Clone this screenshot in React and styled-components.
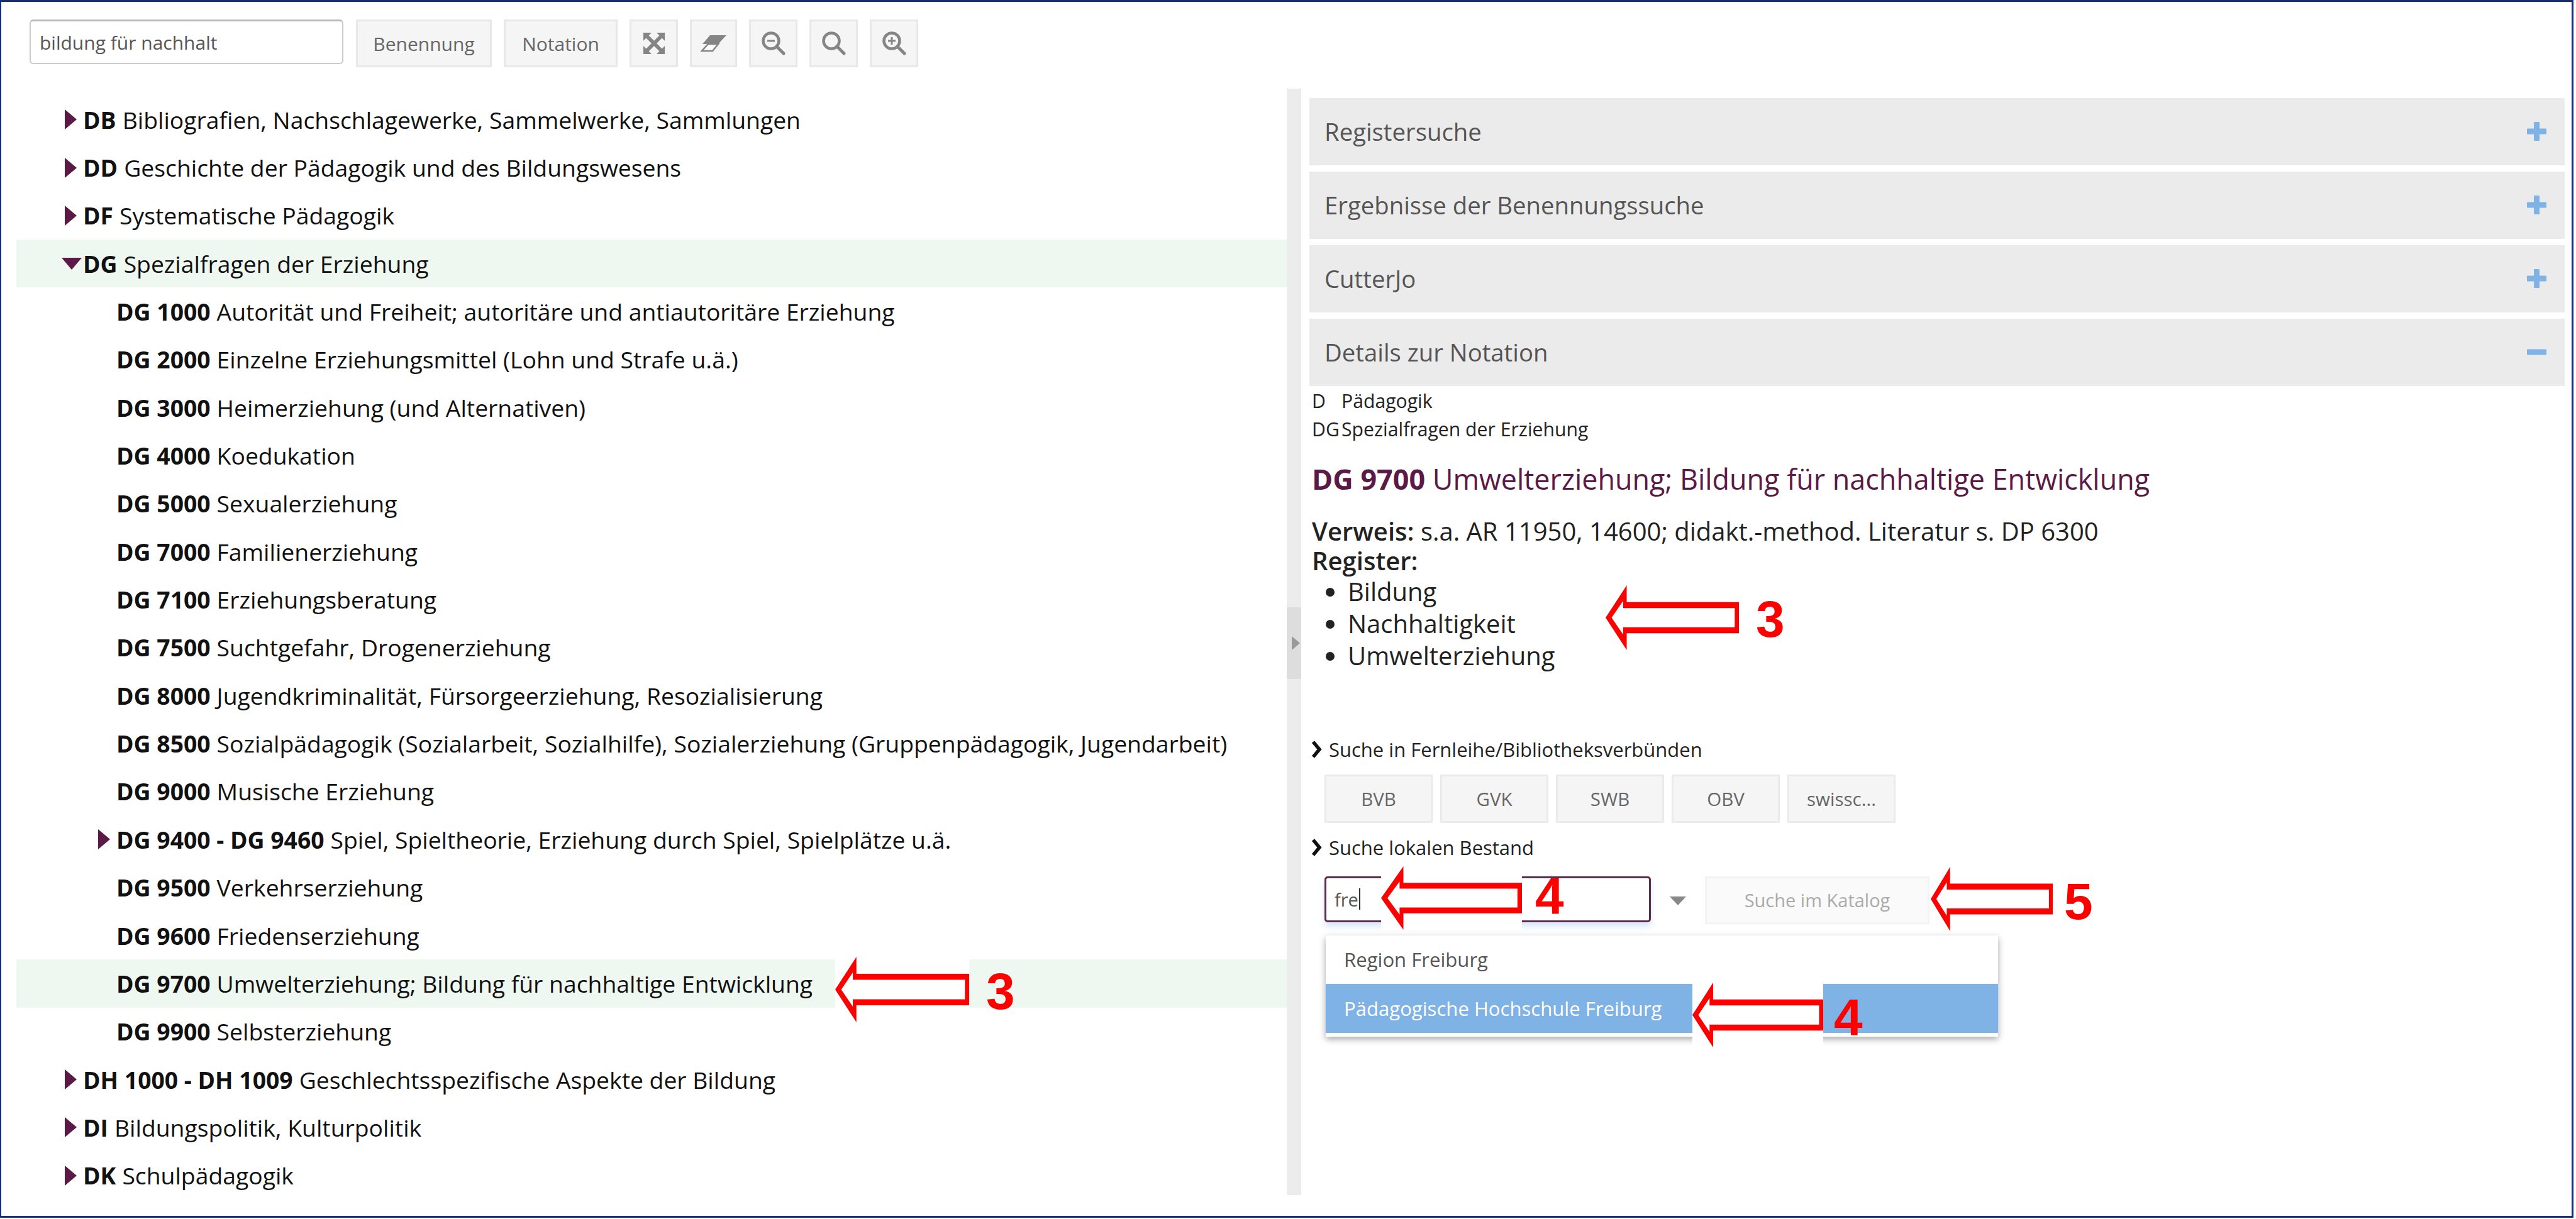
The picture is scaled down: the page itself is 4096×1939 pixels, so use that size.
import React from "react";
import styled, { createGlobalStyle } from "styled-components";

const Global = createGlobalStyle`
  html, body { margin: 0; padding: 0; background: #fff; }
  body { font-family: "Open Sans", "Noto Sans", sans-serif; }
`;

const Root = styled.div`
  position: relative;
  box-sizing: border-box;
  width: 4092px;
  height: 1937px;
  border: solid #13306c;
  border-width: 3px 3px 3px 2px;
  background: #fff;
  overflow: hidden;
  display: flex;
  flex-direction: column;
`;

const Toolbar = styled.div`
  display: flex;
  align-items: flex-start;
  gap: 19px;
  padding: 28px 0 0 45px;
  height: 138px;
  box-sizing: border-box;
  flex: none;
`;

const SearchInput = styled.div`
  box-sizing: border-box;
  width: 499px;
  height: 71px;
  margin-right: 1px;
  border: 2px solid #ccc;
  border-top: 3px solid #bbb;
  border-radius: 6px;
  padding-left: 14px;
  display: flex;
  align-items: center;
  font-size: 30px;
  color: #555;
`;

const ToolButton = styled.div`
  box-sizing: border-box;
  width: ${(p) => p.$w}px;
  height: 76px;
  background: #f5f5f5;
  border: 3px solid #e8e8e8;
  display: flex;
  align-items: center;
  justify-content: center;
  font-size: 30px;
  color: #666;
`;

const Main = styled.div`
  display: flex;
  align-items: flex-start;
  flex: none;
`;

const Tree = styled.div`
  box-sizing: border-box;
  width: 2020px;
  margin-left: 24px;
  padding-top: 11px;
  flex: none;
`;

const Row = styled.div`
  box-sizing: border-box;
  height: 76.35px;
  display: flex;
  align-items: center;
  padding-left: ${(p) => p.$indent}px;
  background: ${(p) => (p.$active ? "#eef7f0" : "transparent")};
  font-size: 37.3px;
  color: #111;
  white-space: nowrap;
`;

const ToggleSlot = styled.span`
  width: 31px;
  flex: none;
  display: flex;
  align-items: center;
  justify-content: flex-start;
`;

const RightTri = styled.span`
  width: 0;
  height: 0;
  margin-left: 2px;
  border-style: solid;
  border-width: 16px 0 16px 19px;
  border-color: transparent transparent transparent #5b1a45;
`;

const DownTri = styled.span`
  width: 0;
  height: 0;
  margin-left: -3px;
  border-style: solid;
  border-width: 19px 16px 0 16px;
  border-color: #5b1a45 transparent transparent transparent;
`;

const Code = styled.b`
  font-weight: 700;
  margin-right: 10px;
`;

const Splitter = styled.div`
  width: 23px;
  height: 1760px;
  flex: none;
  background: #ececec;
  display: flex;
  flex-direction: column;
  padding-top: 825px;
  box-sizing: border-box;
`;

const SplitHandle = styled.div`
  height: 114px;
  background: #dddddd;
  display: flex;
  align-items: center;
  padding-left: 8px;
  box-sizing: border-box;
`;

const SplitTri = styled.span`
  width: 0;
  height: 0;
  border-style: solid;
  border-width: 11px 0 11px 13px;
  border-color: transparent transparent transparent #999;
`;

const Right = styled.div`
  flex: none;
  width: 1996px;
  margin-left: 13px;
  padding-top: 15px;
  box-sizing: border-box;
`;

const Accordion = styled.div`
  display: flex;
  flex-direction: column;
  gap: 10.5px;
`;

const AccHead = styled.div`
  box-sizing: border-box;
  height: 106.5px;
  background: #ebebeb;
  padding: 0 29px 0 24px;
  display: flex;
  align-items: center;
  justify-content: space-between;
  font-size: 38.3px;
  color: #555;
`;

const Crumbs = styled.div`
  display: grid;
  grid-template-columns: 47px auto;
  justify-content: start;
  grid-auto-rows: 45px;
  align-items: center;
  margin: 1px 0 0 4px;
  font-size: 30.2px;
  color: #222;
`;

const Title = styled.div`
  margin: 27px 0 0 4px;
  font-size: 44.9px;
  line-height: 60px;
  color: #5b1a45;
  white-space: nowrap;
  b { font-weight: 700; }
`;

const Reference = styled.div`
  margin: 29px 0 0 4px;
  font-size: 40px;
  line-height: 47px;
  color: #222;
  b { font-weight: 600; }
`;

const RegisterList = styled.ul`
  margin: 0 0 0 4px;
  padding: 0 0 0 57px;
  font-size: 40px;
  line-height: 51px;
  color: #222;
  list-style: disc;
`;

const SectionLabel = styled.div`
  display: flex;
  align-items: center;
  gap: 11px;
  height: 40px;
  margin: ${(p) => p.$top}px 0 0 3px;
  font-size: 31px;
  color: #222;
`;

const LibRow = styled.div`
  display: flex;
  gap: 12px;
  margin: 20px 0 0 24px;
`;

const LibButton = styled.div`
  box-sizing: border-box;
  width: 172px;
  height: 77px;
  background: #f5f5f5;
  border: 3px solid #ebebeb;
  display: flex;
  align-items: center;
  justify-content: center;
  font-size: 29.5px;
  color: #666;
`;

const InputRow = styled.div`
  position: relative;
  display: flex;
  align-items: flex-start;
  margin: 26px 0 0 24px;
`;

const LocalInput = styled.div`
  box-sizing: border-box;
  width: 519px;
  height: 73px;
  border: 3px solid #5b2a4d;
  border-radius: 5px;
  box-shadow: 0 7px 10px rgba(130, 180, 235, 0.3);
  padding-left: 13px;
  display: flex;
  align-items: center;
  font-size: 29px;
  color: #555;
`;

const Caret = styled.span`
  display: inline-block;
  width: 2px;
  height: 34px;
  background: #333;
  margin-left: 1px;
`;

const SelectTri = styled.span`
  width: 0;
  height: 0;
  margin: 32px 0 0 30px;
  border-style: solid;
  border-width: 14px 13px 0 13px;
  border-color: #888 transparent transparent transparent;
`;

const CatalogButton = styled.div`
  box-sizing: border-box;
  width: 357px;
  height: 76px;
  margin-left: 30px;
  background: #fafafa;
  border: 3px solid #f3f3f3;
  display: flex;
  align-items: center;
  justify-content: center;
  font-size: 29px;
  color: #aaa;
`;

const Dropdown = styled.div`
  position: absolute;
  left: 2px;
  top: 94px;
  width: 1069px;
  padding-bottom: 6px;
  background: #fff;
  box-shadow: 0 4px 10px rgba(0, 0, 0, 0.35);
`;

const DropItem = styled.div`
  box-sizing: border-box;
  height: ${(p) => (p.$selected ? 78 : 77)}px;
  padding-left: 29px;
  display: flex;
  align-items: center;
  font-size: 31.1px;
  background: ${(p) => (p.$selected ? "#7fb2e5" : "#fff")};
  color: ${(p) => (p.$selected ? "#fff" : "#555")};
`;

const ArrowBox = styled.svg`
  position: absolute;
  left: ${(p) => p.$x}px;
  top: ${(p) => p.$y}px;
  width: ${(p) => p.$w}px;
  height: ${(p) => p.$h}px;
`;

const Digit = styled.span`
  position: absolute;
  left: ${(p) => p.$x}px;
  top: ${(p) => p.$y}px;
  font-family: "Liberation Sans", Arial, sans-serif;
  font-weight: 700;
  font-size: 82px;
  line-height: 1;
  color: #ff0000;
`;

const Arrow = ({ x, y, w, h }) => (
  <ArrowBox $x={x} $y={y} $w={w} $h={h} viewBox="0 0 221 108" preserveAspectRatio="none">
    <rect x="0" y="0" width="221" height="108" fill="#fff" />
    <polygon points="0,54 35,0 35,28 221,28 221,80 35,80 35,108" fill="#ff0000" />
    <polygon points="10,54 29,26 29,38 214,38 214,70 29,70 29,82" fill="#fff" />
  </ArrowBox>
);

const PlusIcon = () => (
  <svg width="31" height="30" viewBox="0 0 31 30">
    <rect x="11" y="0" width="9" height="30" rx="1" fill="#7fb2e5" />
    <rect x="0" y="10.5" width="31" height="9" rx="1" fill="#7fb2e5" />
  </svg>
);

const MinusIcon = () => (
  <svg width="31" height="30" viewBox="0 0 31 30">
    <rect x="0" y="10.5" width="31" height="9" rx="1" fill="#7fb2e5" />
  </svg>
);

const ExpandIcon = () => (
  <svg width="34" height="34" viewBox="0 0 34 34">
    <g fill="#858585">
      <polygon points="0,0 13,0 0,13" />
      <polygon points="34,0 21,0 34,13" />
      <polygon points="0,34 13,34 0,21" />
      <polygon points="34,34 21,34 34,21" />
    </g>
    <path d="M6 6 L28 28 M28 6 L6 28" stroke="#858585" strokeWidth="6" />
  </svg>
);

const EraserIcon = () => (
  <svg width="42" height="28" viewBox="0 0 42 28">
    <polygon points="15,1 41,1 28,15 3,15" fill="#858585" />
    <polygon points="12,15 28,15 19,26 2,26" fill="#fff" stroke="#858585" strokeWidth="2.5" />
  </svg>
);

const MagnifierIcon = ({ mode }) => (
  <svg width="38" height="38" viewBox="0 0 38 38">
    <circle cx="15" cy="15" r="12.5" fill="none" stroke="#858585" strokeWidth="4.5" />
    <path d="M24 24 L35 35" stroke="#858585" strokeWidth="5" strokeLinecap="round" />
    {mode !== "none" && <path d="M9 15 H21" stroke="#858585" strokeWidth="3" />}
    {mode === "plus" && <path d="M15 9 V21" stroke="#858585" strokeWidth="3" />}
  </svg>
);

const Chevron = () => (
  <svg width="17" height="28" viewBox="0 0 17 28">
    <path d="M3 2 L13 14 L3 26" fill="none" stroke="#111" strokeWidth="5.5" />
  </svg>
);

const rows = [
  { l: 0, t: "r", c: "DB", x: "Bibliografien, Nachschlagewerke, Sammelwerke, Sammlungen" },
  { l: 0, t: "r", c: "DD", x: "Geschichte der Pädagogik und des Bildungswesens" },
  { l: 0, t: "r", c: "DF", x: "Systematische Pädagogik" },
  { l: 0, t: "d", c: "DG", x: "Spezialfragen der Erziehung", a: true },
  { l: 1, c: "DG 1000", x: "Autorität und Freiheit; autoritäre und antiautoritäre Erziehung" },
  { l: 1, c: "DG 2000", x: "Einzelne Erziehungsmittel (Lohn und Strafe u.ä.)" },
  { l: 1, c: "DG 3000", x: "Heimerziehung (und Alternativen)" },
  { l: 1, c: "DG 4000", x: "Koedukation" },
  { l: 1, c: "DG 5000", x: "Sexualerziehung" },
  { l: 1, c: "DG 7000", x: "Familienerziehung" },
  { l: 1, c: "DG 7100", x: "Erziehungsberatung" },
  { l: 1, c: "DG 7500", x: "Suchtgefahr, Drogenerziehung" },
  { l: 1, c: "DG 8000", x: "Jugendkriminalität, Fürsorgeerziehung, Resozialisierung" },
  { l: 1, c: "DG 8500", x: "Sozialpädagogik (Sozialarbeit, Sozialhilfe), Sozialerziehung (Gruppenpädagogik, Jugendarbeit)" },
  { l: 1, c: "DG 9000", x: "Musische Erziehung" },
  { l: 1, t: "r", c: "DG 9400 - DG 9460", x: "Spiel, Spieltheorie, Erziehung durch Spiel, Spielplätze u.ä." },
  { l: 1, c: "DG 9500", x: "Verkehrserziehung" },
  { l: 1, c: "DG 9600", x: "Friedenserziehung" },
  { l: 1, c: "DG 9700", x: "Umwelterziehung; Bildung für nachhaltige Entwicklung", a: true },
  { l: 1, c: "DG 9900", x: "Selbsterziehung" },
  { l: 0, t: "r", c: "DH 1000 - DH 1009", x: "Geschlechtsspezifische Aspekte der Bildung" },
  { l: 0, t: "r", c: "DI", x: "Bildungspolitik, Kulturpolitik" },
  { l: 0, t: "r", c: "DK", x: "Schulpädagogik" },
];

const arrows = [
  { x: 1326, y: 1519, w: 213, h: 104 },
  { x: 2551, y: 928, w: 212, h: 103 },
  { x: 2194, y: 1375, w: 224, h: 101 },
  { x: 3068, y: 1376, w: 194, h: 102 },
  { x: 2689, y: 1560, w: 208, h: 103 },
];

const digits = [
  { x: 1566, y: 1533, d: "3" },
  { x: 2790, y: 941, d: "3" },
  { x: 2439, y: 1381, d: "4" },
  { x: 3280, y: 1390, d: "5" },
  { x: 2914, y: 1574, d: "4" },
];

export default function App() {
  return (
    <>
      <Global />
      <Root>
        <Toolbar>
          <SearchInput>bildung für nachhalt</SearchInput>
          <ToolButton $w={216}>Benennung</ToolButton>
          <ToolButton $w={181}>Notation</ToolButton>
          <ToolButton $w={77}><ExpandIcon /></ToolButton>
          <ToolButton $w={75}><EraserIcon /></ToolButton>
          <ToolButton $w={77}><MagnifierIcon mode="minus" /></ToolButton>
          <ToolButton $w={77}><MagnifierIcon mode="none" /></ToolButton>
          <ToolButton $w={77}><MagnifierIcon mode="plus" /></ToolButton>
        </Toolbar>
        <Main>
          <Tree>
            {rows.map((r) => (
              <Row key={r.c} $active={r.a} $indent={r.l === 1 ? (r.t ? 128 : 159) : 75}>
                {r.t && (
                  <ToggleSlot>
                    {r.t === "r" ? <RightTri /> : <DownTri />}
                  </ToggleSlot>
                )}
                <Code>{r.c}</Code>
                {r.x}
              </Row>
            ))}
          </Tree>
          <Splitter>
            <SplitHandle><SplitTri /></SplitHandle>
          </Splitter>
          <Right>
            <Accordion>
              <AccHead>Registersuche<PlusIcon /></AccHead>
              <AccHead>Ergebnisse der Benennungssuche<PlusIcon /></AccHead>
              <AccHead>CutterJo<PlusIcon /></AccHead>
              <AccHead>Details zur Notation<MinusIcon /></AccHead>
            </Accordion>
            <Crumbs>
              <span>D</span><span>Pädagogik</span>
              <span>DG</span><span>Spezialfragen der Erziehung</span>
            </Crumbs>
            <Title><b>DG 9700</b> Umwelterziehung; Bildung für nachhaltige Entwicklung</Title>
            <Reference><b>Verweis:</b> s.a. AR 11950, 14600; didakt.-method. Literatur s. DP 6300<br /><b>Register:</b></Reference>
            <RegisterList>
              <li>Bildung</li>
              <li>Nachhaltigkeit</li>
              <li>Umwelterziehung</li>
            </RegisterList>
            <SectionLabel $top={104}><Chevron />Suche in Fernleihe/Bibliotheksverbünden</SectionLabel>
            <LibRow>
              <LibButton>BVB</LibButton>
              <LibButton>GVK</LibButton>
              <LibButton>SWB</LibButton>
              <LibButton>OBV</LibButton>
              <LibButton>swissc...</LibButton>
            </LibRow>
            <SectionLabel $top={19}><Chevron />Suche lokalen Bestand</SectionLabel>
            <InputRow>
              <LocalInput>fre<Caret /></LocalInput>
              <SelectTri />
              <CatalogButton>Suche im Katalog</CatalogButton>
              <Dropdown>
                <DropItem>Region Freiburg</DropItem>
                <DropItem $selected>Pädagogische Hochschule Freiburg</DropItem>
              </Dropdown>
            </InputRow>
          </Right>
        </Main>
        {arrows.map((a) => <Arrow key={a.x} {...a} />)}
        {digits.map((d) => <Digit key={d.x} $x={d.x} $y={d.y}>{d.d}</Digit>)}
      </Root>
    </>
  );
}
